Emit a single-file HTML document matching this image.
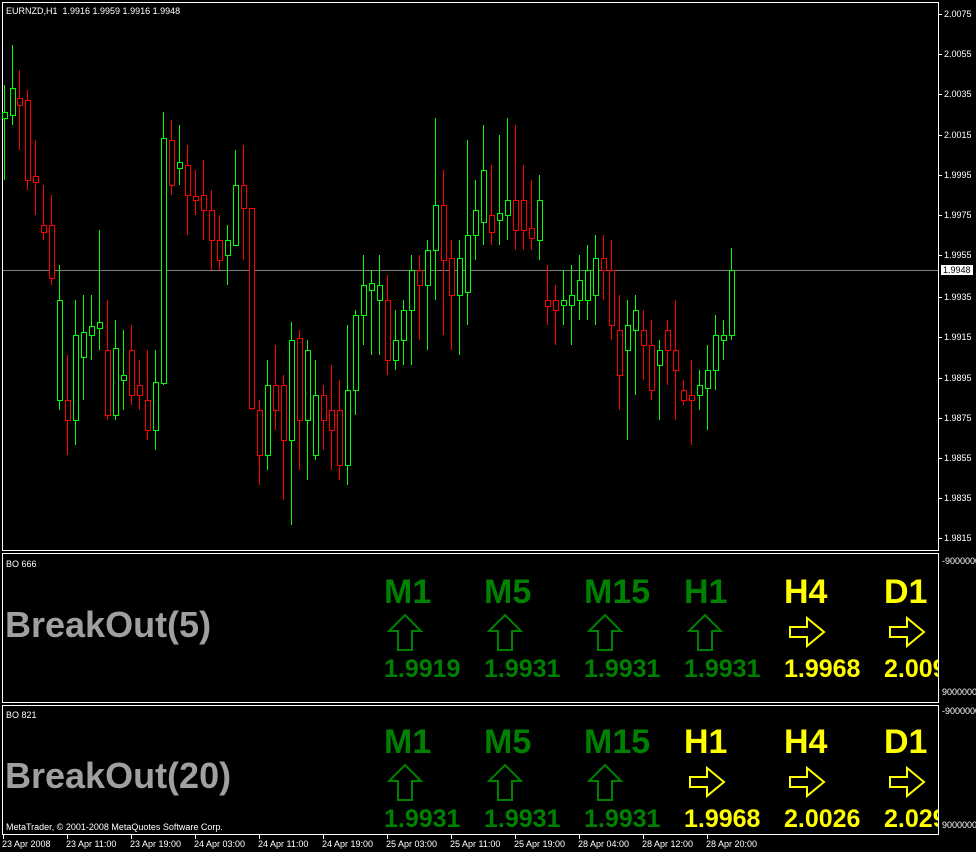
<!DOCTYPE html>
<html><head><meta charset="utf-8"><style>
body{margin:0;background:#000;width:976px;height:852px;overflow:hidden;position:relative;font-family:"Liberation Sans",sans-serif}
.p{position:absolute;border:1px solid #fff;box-sizing:border-box}
.t{position:absolute;color:#fff;font-size:9px;white-space:nowrap;line-height:10px}
.b{position:absolute;font-weight:bold;white-space:nowrap;line-height:1}
.g{color:#008000}.y{color:#ffff00}
</style></head><body>
<div class="p" style="left:2px;top:2px;width:937px;height:549px"></div>
<div class="p" style="left:2px;top:553px;width:937px;height:150px"></div>
<div class="p" style="left:2px;top:705px;width:937px;height:130px"></div>
<div style="position:absolute;left:3px;top:270px;width:935px;height:1px;background:#808080"></div>
<svg id="c" style="position:absolute;left:0;top:0" width="938" height="550"></svg>
<div class="t" style="left:6px;top:6px">EURNZD,H1&nbsp; 1.9916 1.9959 1.9916 1.9948</div>
<div id="ax"></div>
<div class="t" style="left:6px;top:559px">BO 666</div>
<div class="t" style="left:6px;top:710px">BO 821</div>
<div class="t" style="left:6px;top:822px">MetaTrader, © 2001-2008 MetaQuotes Software Corp.</div>
<div class="b" style="left:5px;top:607px;font-size:36px;color:#a0a0a0">BreakOut(5)</div>
<div class="b" style="left:5px;top:758px;font-size:36px;color:#a0a0a0">BreakOut(20)</div>
<div id="ind" style="position:absolute;left:0;top:0;width:938px;height:835px;overflow:hidden"></div>
<script>
var s='';
var d=[[4,112,118,85,180,1],[12,88,115,45,125,1],[19,98,105,70,150,0],[27,100,180,90,190,0],[35,176,182,140,215,0],[43,225,232,185,240,0],[51,225,278,195,285,0],[59,300,400,265,410,1],[67,400,420,355,455,0],[75,335,420,300,445,1],[83,332,357,295,400,1],[91,326,335,295,360,1],[99,322,328,230,350,1],[107,350,415,300,420,0],[115,348,415,320,420,1],[123,375,380,330,410,1],[131,350,395,325,405,0],[139,385,395,360,410,0],[147,400,430,350,440,0],[155,382,430,350,450,1],[163,138,383,112,385,1],[171,140,185,120,195,0],[179,162,168,125,185,1],[187,165,195,145,235,0],[195,196,200,170,215,0],[203,195,210,160,240,0],[211,210,240,190,270,0],[219,240,260,215,270,0],[227,240,255,225,285,1],[235,185,245,150,245,1],[243,185,208,145,260,0],[251,208,408,250,410,0],[259,410,455,400,485,0],[267,385,455,360,470,1],[275,385,410,345,430,0],[283,385,440,375,500,0],[291,340,440,322,525,1],[299,338,420,330,470,0],[307,350,420,340,480,1],[315,395,455,360,460,1],[323,395,420,385,450,0],[331,410,430,365,470,0],[339,410,465,380,480,0],[347,390,465,325,485,1],[355,315,390,310,415,1],[363,285,315,255,345,1],[371,283,290,270,355,1],[379,285,300,255,355,1],[387,300,360,275,375,0],[395,340,360,310,370,1],[403,310,340,300,365,1],[411,270,310,255,365,1],[419,270,285,255,340,0],[427,250,285,240,350,1],[435,205,250,118,300,1],[443,205,260,170,335,0],[451,258,295,240,350,0],[459,258,295,240,355,1],[467,235,292,140,325,1],[475,210,235,180,260,1],[483,170,222,125,245,1],[491,215,232,165,245,0],[499,213,220,135,245,1],[507,200,215,118,240,1],[515,200,230,125,250,0],[523,200,230,165,250,0],[531,228,238,180,250,0],[539,200,240,175,260,1],[547,300,306,265,325,0],[555,300,310,285,345,0],[563,300,305,270,325,1],[571,295,305,265,345,1],[579,280,300,255,320,1],[587,270,300,245,320,1],[595,258,295,235,325,1],[603,258,270,235,300,0],[611,270,325,240,340,0],[619,330,375,295,410,0],[627,325,350,300,440,1],[635,310,330,295,395,1],[643,330,345,310,380,0],[651,345,390,320,400,0],[659,350,365,340,420,1],[667,330,350,320,385,0],[675,350,370,300,420,0],[683,390,400,380,405,0],[691,395,400,360,445,0],[699,385,395,370,410,1],[707,370,388,345,430,1],[715,335,370,315,390,1],[723,335,340,320,360,1],[731,270,335,248,340,1]];
d.forEach(function(c){var col=c[5]?'#00ff00':'#ff0000';
s+='<line x1="'+c[0]+'.5" y1="'+c[3]+'" x2="'+c[0]+'.5" y2="'+c[4]+'" stroke="'+col+'"/>';
s+='<rect x="'+(c[0]-2)+'.5" y="'+c[1]+'.5" width="5" height="'+Math.max(1,c[2]-c[1])+'" fill="#000" stroke="'+col+'"/>';});
document.getElementById('c').innerHTML=s;
var a='',pr=[['2.0075',14],['2.0055',54],['2.0035',94],['2.0015',135],['1.9995',175],['1.9975',215],['1.9955',255],['1.9935',297],['1.9915',337],['1.9895',378],['1.9875',418],['1.9855',458],['1.9835',498],['1.9815',538]];
pr.forEach(function(p){a+='<div class="t" style="left:944px;top:'+(p[1]-5)+'px">'+p[0]+'</div><div style="position:absolute;left:938px;top:'+p[1]+'px;width:4px;height:1px;background:#fff"></div>';});
a+='<div class="t" style="left:941px;top:265px;background:#fff;color:#000;padding:0 2px">1.9948</div>';
[['-9000000',561],['9000000',692],['-9000000',711],['9000000',825]].forEach(function(p){a+='<div class="t" style="left:942px;top:'+(p[1]-5)+'px">'+p[0]+'</div>';});
var tl=['23 Apr 2008','23 Apr 11:00','23 Apr 19:00','24 Apr 03:00','24 Apr 11:00','24 Apr 19:00','25 Apr 03:00','25 Apr 11:00','25 Apr 19:00','28 Apr 04:00','28 Apr 12:00','28 Apr 20:00'];
tl.forEach(function(t,i){var x=3+i*64;a+='<div class="t" style="left:'+(x-1)+'px;top:839px">'+t+'</div><div style="position:absolute;left:'+x+'px;top:835px;width:1px;height:4px;background:#fff"></div>';});
document.getElementById('ax').innerHTML=a;
var up='<svg width="40" height="40" style="position:absolute" viewBox="0 0 40 40"><path d="M18 2 L34 18 L25 18 L25 37 L11 37 L11 18 L2 18 Z" fill="none" stroke="#008000" stroke-width="2"/></svg>';
var rt='<svg width="40" height="40" style="position:absolute" viewBox="0 0 40 40"><path d="M2 12 L19 12 L19 3 L36 17 L19 31 L19 22 L2 22 Z" fill="none" stroke="#ffff00" stroke-width="2"/></svg>';
function panel(top,items){var h='';items.forEach(function(it,i){var x=384+i*100,c=it[1]?'g':'y';
h+='<div class="b '+c+'" style="left:'+x+'px;top:'+top+'px;font-size:34px">'+it[0]+'</div>';
h+='<div style="position:absolute;left:'+(x+(it[1]?3:4))+'px;top:'+(top+(it[1]?38:40))+'px">'+(it[1]?up:rt)+'</div>';
h+='<div class="b '+c+'" style="left:'+x+'px;top:'+(top+82)+'px;font-size:25px">'+it[2]+'</div>';});return h;}
document.getElementById('ind').innerHTML=panel(575,[['M1',1,'1.9919'],['M5',1,'1.9931'],['M15',1,'1.9931'],['H1',1,'1.9931'],['H4',0,'1.9968'],['D1',0,'2.0098']])+panel(725,[['M1',1,'1.9931'],['M5',1,'1.9931'],['M15',1,'1.9931'],['H1',0,'1.9968'],['H4',0,'2.0026'],['D1',0,'2.0290']]);
</script>
</body></html>
